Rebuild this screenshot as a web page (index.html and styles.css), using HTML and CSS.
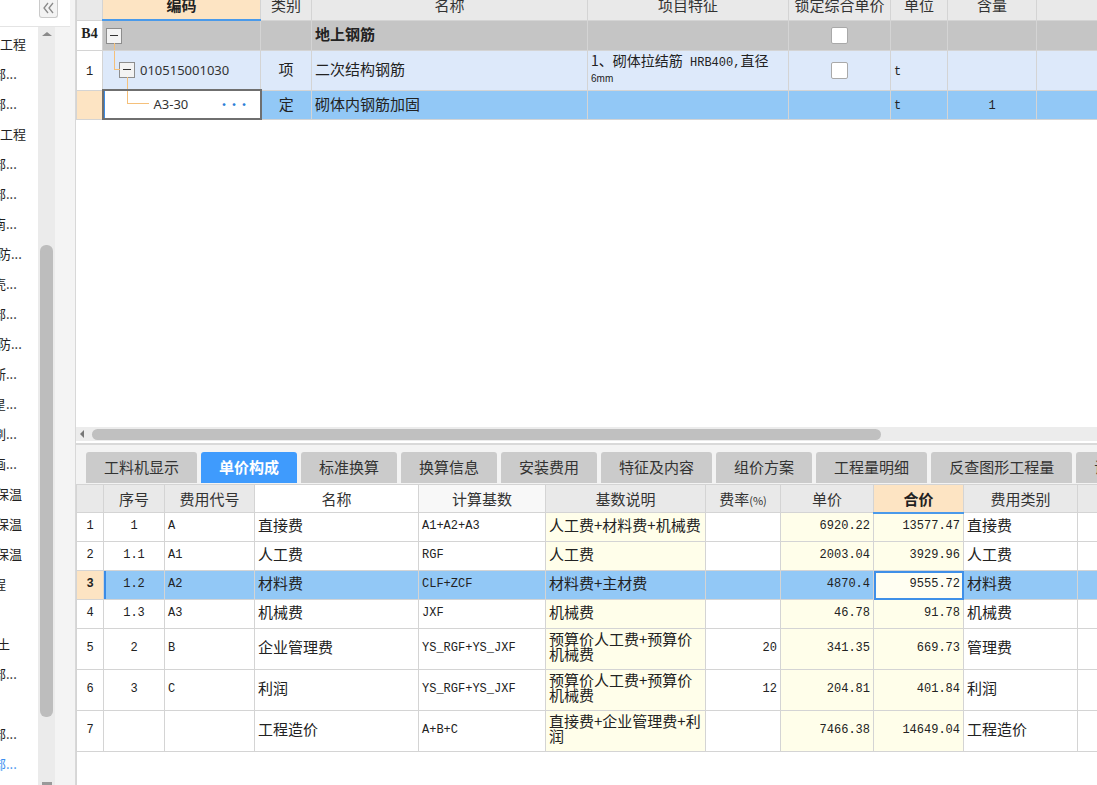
FILE: index.html
```html
<!DOCTYPE html>
<html lang="zh-CN">
<head>
<meta charset="utf-8">
<title>单价构成</title>
<link rel="stylesheet" href="styles.css">
</head>
<body>
<div class="app">
  <aside class="side">
    <div class="side-top">
      <span class="collapse"><svg width="17" height="16" viewBox="0 0 17 16"><path d="M8 3 L4 8 L8 13 M13 3 L9 8 L13 13" fill="none" stroke="#8a8a8a" stroke-width="1.3"/></svg></span>
    </div>
    <div class="side-body">
      <ul class="tree">
        <li>工程</li>
        <li class="s7">部...</li>
        <li class="s7">部...</li>
        <li>工程</li>
        <li class="s7">部...</li>
        <li class="s7">部...</li>
        <li class="s7">南...</li>
        <li class="s2">防...</li>
        <li class="s7">壳...</li>
        <li class="s7">部...</li>
        <li class="s2">防...</li>
        <li class="s7">断...</li>
        <li class="s7">星...</li>
        <li class="s7">刷...</li>
        <li class="s7">画...</li>
        <li class="s4">保温</li>
        <li class="s4">保温</li>
        <li class="s4">保温</li>
        <li class="s7">程</li>
        <li></li>
        <li class="s3">土</li>
        <li class="s7">部...</li>
        <li></li>
        <li class="s7">部...</li>
        <li class="s7 link">部...</li>
      </ul>
      <div class="vscroll">
        <span class="arr-up"></span>
        <span class="vthumb"></span>
        <span class="arr-down"></span>
      </div>
      <div class="side-pad"></div>
    </div>
  </aside>

  <main class="main">
    <section class="upper">
      <table class="tg">
        <colgroup>
          <col class="w26"><col class="w158"><col class="w51"><col class="w276"><col class="w201"><col class="w102"><col class="w57"><col class="w89"><col class="w61">
        </colgroup>
        <thead>
          <tr>
            <th></th><th class="sorted">编码</th><th>类别</th><th>名称</th><th>项目特征</th><th>锁定综合单价</th><th>单位</th><th>含量</th><th></th>
          </tr>
        </thead>
        <tbody>
          <tr class="r-b4">
            <td class="rn b4">B4</td>
            <td class="code"><span class="tog"></span><span class="ln b4-down"></span></td>
            <td></td>
            <td class="nm strong">地上钢筋</td>
            <td></td>
            <td class="ctr"><span class="chk"></span></td>
            <td></td><td></td><td></td>
          </tr>
          <tr class="r-item">
            <td class="rn mono">1</td>
            <td class="code c1"><span class="ln i-up"></span><span class="ln i-h"></span><span class="tog"></span><span class="codetxt">010515001030</span><span class="ln i-down"></span></td>
            <td class="ctr nm">项</td>
            <td class="nm">二次结构钢筋</td>
            <td class="feat"><div class="f1">1、砌体拉结筋<span class="mono"> HRB400,</span>直径</div><div class="f2">6mm</div></td>
            <td class="ctr"><span class="chk"></span></td>
            <td class="mono">t</td><td></td><td></td>
          </tr>
          <tr class="r-sel">
            <td class="rn cur"></td>
            <td class="code edit"><span class="ln s-up"></span><span class="ln s-h"></span><span class="codetxt sub">A3-30</span><span class="dots">···</span></td>
            <td class="ctr nm">定</td>
            <td class="nm">砌体内钢筋加固</td>
            <td></td><td></td>
            <td class="mono">t</td><td class="ctr mono">1</td><td></td>
          </tr>
        </tbody>
      </table>
    </section>

    <div class="hscroll"><span class="arr-left"></span><span class="hthumb"></span></div>
    <div class="split"></div>

    <nav class="tabs">
      <span class="tab">工料机显示</span>
      <span class="tab active">单价构成</span>
      <span class="tab">标准换算</span>
      <span class="tab">换算信息</span>
      <span class="tab">安装费用</span>
      <span class="tab">特征及内容</span>
      <span class="tab">组价方案</span>
      <span class="tab">工程量明细</span>
      <span class="tab">反查图形工程量</span>
      <span class="tab">说明信息</span>
    </nav>

    <section class="lower">
      <table class="bgrid">
        <colgroup>
          <col class="w27"><col class="w61"><col class="w90"><col class="w164"><col class="w127"><col class="w160"><col class="w75"><col class="w93"><col class="w90"><col class="w114"><col class="w20">
        </colgroup>
        <thead>
          <tr>
            <th></th><th>序号</th><th>费用代号</th><th class="hw">名称</th><th class="hl">计算基数</th><th>基数说明</th><th>费率<span class="pct">(%)</span></th><th>单价</th><th class="sorted">合价</th><th>费用类别</th><th></th>
          </tr>
        </thead>
        <tbody>
          <tr class="h29">
            <td class="rn mono">1</td><td class="ctr mono">1</td><td class="mono">A</td><td>直接费</td><td class="mono">A1+A2+A3</td><td class="yel desc">人工费+材料费+机械费</td><td class="r mono"></td><td class="r mono yel">6920.22</td><td class="r mono yel">13577.47</td><td>直接费</td><td></td>
          </tr>
          <tr class="h29">
            <td class="rn mono">2</td><td class="ctr mono">1.1</td><td class="mono">A1</td><td>人工费</td><td class="mono">RGF</td><td class="yel desc">人工费</td><td class="r mono"></td><td class="r mono yel">2003.04</td><td class="r mono yel">3929.96</td><td>人工费</td><td></td>
          </tr>
          <tr class="h29 sel">
            <td class="rn mono cur strong">3</td><td class="ctr mono mark">1.2</td><td class="mono">A2</td><td>材料费</td><td class="mono">CLF+ZCF</td><td class="desc">材料费+主材费</td><td class="r mono"></td><td class="r mono">4870.4</td><td class="r mono focus">9555.72</td><td>材料费</td><td></td>
          </tr>
          <tr class="h29">
            <td class="rn mono">4</td><td class="ctr mono">1.3</td><td class="mono">A3</td><td>机械费</td><td class="mono">JXF</td><td class="yel desc">机械费</td><td class="r mono"></td><td class="r mono yel">46.78</td><td class="r mono yel">91.78</td><td>机械费</td><td></td>
          </tr>
          <tr class="h41">
            <td class="rn mono">5</td><td class="ctr mono">2</td><td class="mono">B</td><td>企业管理费</td><td class="mono">YS_RGF+YS_JXF</td><td class="yel desc">预算价人工费+预算价机械费</td><td class="r mono">20</td><td class="r mono yel">341.35</td><td class="r mono yel">669.73</td><td>管理费</td><td></td>
          </tr>
          <tr class="h41">
            <td class="rn mono">6</td><td class="ctr mono">3</td><td class="mono">C</td><td>利润</td><td class="mono">YS_RGF+YS_JXF</td><td class="yel desc">预算价人工费+预算价机械费</td><td class="r mono">12</td><td class="r mono yel">204.81</td><td class="r mono yel">401.84</td><td>利润</td><td></td>
          </tr>
          <tr class="h41">
            <td class="rn mono">7</td><td class="ctr mono"></td><td class="mono"></td><td>工程造价</td><td class="mono">A+B+C</td><td class="yel desc">直接费+企业管理费+利润</td><td class="r mono"></td><td class="r mono yel">7466.38</td><td class="r mono yel">14649.04</td><td>工程造价</td><td></td>
          </tr>
        </tbody>
      </table>
    </section>
  </main>
</div>
</body>
</html>
```

FILE: styles.css
```css
* { box-sizing: border-box; }
html, body { margin: 0; padding: 0; }
body {
  width: 1097px;
  height: 785px;
  overflow: hidden;
  background: #fff;
  color: #222;
  font-family: "Noto Sans CJK SC", "Noto Sans", sans-serif;
}
.app { display: flex; height: 785px; }

/* ---------- sidebar ---------- */
.side {
  width: 76px;
  flex: none;
  display: flex;
  flex-direction: column;
  background: #f4f4f4;
  border-right: 1px solid #d8d8d8;
}
.side-top {
  height: 27px;
  width: 70px;
  flex: none;
  background: #fff;
  border-bottom: 1px solid #e4e4e4;
  padding-left: 39px;
}
.collapse {
  display: block;
  width: 19px;
  height: 18px;
  border: 1px solid #cacaca;
  border-top: none;
  border-radius: 0 0 3px 3px;
  background: #f3f3f3;
}
.collapse svg { display: block; }
.side-body { flex: 1; display: flex; min-height: 0; }
.tree {
  width: 38px;
  flex: none;
  margin: 0;
  padding: 2px 0 0;
  list-style: none;
  background: #fff;
  overflow: hidden;
  font-size: 13px;
  color: #222;
}
.tree li { height: 30px; line-height: 30px; white-space: nowrap; }
.tree .s2 { margin-left: -2px; }
.tree .s3 { margin-left: -3px; }
.tree .s4 { margin-left: -4px; }
.tree .s7 { margin-left: -7px; }
.tree .link { color: #3b8ff0; }
.vscroll {
  width: 17px;
  flex: none;
  background: #ebebeb;
  display: flex;
  flex-direction: column;
  align-items: center;
  padding-top: 5px;
}
.arr-up {
  width: 0; height: 0;
  border-left: 5px solid transparent;
  border-right: 5px solid transparent;
  border-bottom: 4px solid #8a8a8a;
}
.vthumb {
  width: 13px;
  height: 472px;
  margin-top: 209px;
  border-radius: 6px;
  background: #bdbdbd;
}
.arr-down {
  margin-top: auto;
  width: 10px; height: 3px;
  background: #9a9a9a;
}
.side-pad { flex: 1; background: #f4f4f4; }

/* ---------- main ---------- */
.main { flex: 1; min-width: 0; display: flex; flex-direction: column; }
.upper { height: 427px; flex: none; overflow: hidden; background: #fff; }

table { border-collapse: collapse; table-layout: fixed; }
.w20 { width: 20px; } .w26 { width: 26px; } .w27 { width: 27px; } .w51 { width: 51px; }
.w57 { width: 57px; } .w61 { width: 61px; } .w75 { width: 75px; } .w89 { width: 89px; }
.w90 { width: 90px; } .w93 { width: 93px; } .w102 { width: 102px; } .w114 { width: 114px; }
.w127 { width: 127px; } .w158 { width: 158px; } .w160 { width: 160px; } .w164 { width: 164px; }
.w201 { width: 201px; } .w276 { width: 276px; }

.mono { font-family: "Liberation Mono", "DejaVu Sans Mono", monospace; font-size: 12px; }
.ctr { text-align: center; }
.strong { font-weight: bold; }

/* top grid */
.tg { width: 1021px; margin-top: -10px; }
.tg th, .tg td {
  border: 1px solid #d4d4d4;
  padding: 0 3px;
  white-space: nowrap;
  overflow: hidden;
}
.tg th {
  background: #e9e9e9;
  font-weight: normal;
  font-size: 15px;
  color: #333;
  text-align: center;
  height: 29px;
  line-height: 28px;
}
.tg th.sorted { background: #fde4c3; font-weight: bold; color: #222; border-bottom: 2px solid #4a9aea; }
.tg td { font-size: 15px; line-height: 18px; padding-bottom: 2px; }
.tg td.mono { font-size: 12px; padding-top: 3px; padding-bottom: 0; }
.tg .r-b4 { height: 30px; }
.tg .r-b4 td { background: #c5c5c5; }
.tg .r-item { height: 40px; }
.tg .r-item td { background: #dde9fa; }
.tg .r-sel { height: 29px; }
.tg .r-sel td { background: #92c8f6; }
.tg td.rn { background: #fff; text-align: center; padding-left: 0; padding-right: 0; }
.tg td.b4 { font-family: "Liberation Serif", serif; font-weight: bold; font-size: 14px; }
.tg td.cur { background: #fde4c3; }
.nm { color: #222; }
.tg td.strong { font-weight: bold; }

.code { position: relative; }
.tog {
  display: inline-block;
  vertical-align: middle;
  width: 16px;
  height: 16px;
  border: 1px solid #8d8d8d;
  background: #f3f3f3 linear-gradient(#333, #333) no-repeat center / 8px 1px;
}
.code.c1 { padding-left: 16px; }
.codetxt { font-family: "Noto Sans", sans-serif; font-size: 13px; color: #333; vertical-align: middle; margin-left: 5px; }
.codetxt.sub { margin-left: 47px; }
.ln { position: absolute; background: #f5c07a; }
.b4-down { left: 11px; top: 22px; bottom: -1px; width: 1px; }
.i-up { left: 11px; top: -1px; height: 19px; width: 1px; }
.i-h { left: 11px; top: 18px; width: 6px; height: 1px; }
.i-down { left: 24px; top: 26px; bottom: -1px; width: 1px; }
.s-up { left: 23px; top: -2px; height: 15px; width: 1px; }
.s-h { left: 23px; top: 12px; width: 22px; height: 1px; }
.tg td.edit {
  background: #fff;
  border: 2px solid #6f6f6f;
  box-shadow: inset 1px 0 0 #3b8ce6;
}
.dots {
  float: right;
  color: #2f7fd8;
  font-weight: bold;
  font-size: 11px;
  letter-spacing: -1px;
  margin-right: 8px;
  line-height: 20px;
}
.chk {
  display: inline-block;
  vertical-align: middle;
  width: 17px;
  height: 17px;
  background: #fff;
  border: 1px solid #a9a9a9;
  border-radius: 2px;
}
.tg td.feat { vertical-align: top; padding-top: 0; }
.f1 { font-size: 14px; line-height: 18px; }
.f1 .mono { font-size: 12px; }
.f2 { font-size: 10px; line-height: 14px; font-family: "Liberation Sans", sans-serif; }

/* horizontal scrollbar */
.hscroll {
  height: 14px;
  flex: none;
  background: #ececec;
  display: flex;
  align-items: center;
  padding-left: 4px;
}
.arr-left {
  width: 0; height: 0;
  border-top: 4px solid transparent;
  border-bottom: 4px solid transparent;
  border-right: 4px solid #777;
}
.hthumb {
  width: 789px;
  height: 11px;
  margin-left: 8px;
  border-radius: 6px;
  background: #c0c0c0;
}
.split { height: 4px; flex: none; background: #fff; border-bottom: 2px solid #d9d9d9; }

/* tabs */
.tabs {
  height: 39px;
  flex: none;
  background: #f3f3f3;
  padding: 7px 0 0 10px;
  display: flex;
  gap: 4px;
  overflow: hidden;
  white-space: nowrap;
}
.tab {
  flex: none;
  height: 31px;
  line-height: 30px;
  padding: 0 18px;
  background: #cbcbcb;
  border-radius: 3px 3px 0 0;
  font-size: 15px;
  color: #333;
}
.tab.active { background: #3f9bfd; color: #fff; font-weight: bold; }

/* bottom grid */
.lower { flex: 1; background: #fff; border-left: 1px solid #d6d6d6; }
.bgrid { width: 1021px; margin-left: -1px; }
.bgrid th, .bgrid td {
  border: 1px solid #d4d4d4;
  padding: 0 3px;
  white-space: nowrap;
  overflow: hidden;
  font-size: 15px;
}
.bgrid td { line-height: 16px; padding-bottom: 5px; }
.bgrid td.mono { font-size: 12px; padding-bottom: 3px; }
.bgrid th {
  height: 28px;
  background: #e9e9e9;
  font-weight: normal;
  color: #333;
  text-align: center;
}
.bgrid th.hw { background: #fff; }
.bgrid th.hl { background: #f8f8f8; }
.bgrid th.sorted { background: #fde4c3; color: #222; font-weight: bold; border-bottom: 2px solid #4a9aea; }
.pct { font-size: 11px; }
.bgrid .h29 { height: 29px; }
.bgrid .h41 { height: 41px; }
.bgrid td.rn { text-align: center; padding-left: 0; padding-right: 0; }
.bgrid .r { text-align: right; }
.bgrid .yel { background: #fffeea; }
.bgrid td.desc { white-space: normal; word-break: break-all; line-height: 15px; padding-bottom: 6px; }
.bgrid .sel td { background: #92c8f6; }
.bgrid .sel td.cur { background: #fde4c3; }
.bgrid .sel td.mark { box-shadow: inset 2px 0 0 #3b8ce6; }
.bgrid .sel td.focus { background: #fffef2; outline: 2px solid #3f8fe8; outline-offset: -2px; }
```
